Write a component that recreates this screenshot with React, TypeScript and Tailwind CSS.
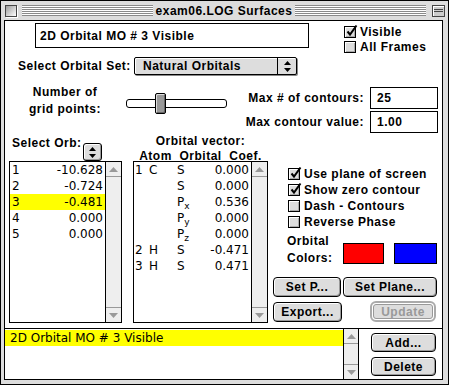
import React from 'react';

const sans = "font-['Liberation_Sans',Arial,sans-serif] tracking-[0.5px]";
const geneva = "font-['DejaVu_Sans',Verdana,sans-serif] tracking-normal";

function CheckBox({ checked = false, children }: { checked?: boolean; children: React.ReactNode }) {
  return (
    <div className="flex h-[16px] items-center">
      <div className="relative h-[12px] w-[12px] border border-black bg-[#dddddd] shadow-[inset_1px_1px_0_#ffffff,inset_-1px_-1px_0_#aaaaaa]">
        {checked && (
          <svg className="absolute left-[1px] top-[-3px]" width="12" height="13" viewBox="0 0 12 13">
            <path d="M1.5 7.5 L4 10.5 L10.5 1.5" stroke="#000" strokeWidth="2" fill="none" />
          </svg>
        )}
      </div>
      <span className="ml-[4px] text-[12px] font-bold leading-[14px]">{children}</span>
    </div>
  );
}

function PushButton({ children, className }: { children: React.ReactNode; className: string }) {
  return (
    <div
      className={`flex items-center justify-center rounded-[4px] border border-black bg-[#dddddd] text-[12px] font-bold leading-none shadow-[inset_1px_1px_0_#ffffff,inset_-1px_-1px_0_#999999] ${className}`}
    >
      {children}
    </div>
  );
}

function Arrows() {
  return (
    <svg width="7" height="11" viewBox="0 0 7 11">
      <path d="M0 4 L3.5 0 L7 4 Z M0 7 L3.5 11 L7 7 Z" fill="#000" />
    </svg>
  );
}

function ScrollBar({ className = '' }: { className?: string }) {
  return (
    <div className={`flex w-[16px] flex-col justify-between border-l border-black bg-[#eeeeee] ${className}`}>
      <div className="flex h-[15px] items-center justify-center border-b border-[#999999]">
        <svg width="9" height="5" viewBox="0 0 9 5">
          <path d="M0 5 L4.5 0 L9 5 Z" fill="#999999" />
        </svg>
      </div>
      <div className="flex h-[15px] items-center justify-center border-t border-[#999999]">
        <svg width="9" height="5" viewBox="0 0 9 5">
          <path d="M0 0 L4.5 5 L9 0 Z" fill="#999999" />
        </svg>
      </div>
    </div>
  );
}

const orbs = [
  ['1', '-10.628'],
  ['2', '-0.724'],
  ['3', '-0.481'],
  ['4', '0.000'],
  ['5', '0.000'],
];

const vec: [string, string, string, string | null, string][] = [
  ['1', 'C', 'S', null, '0.000'],
  ['', '', 'S', null, '0.000'],
  ['', '', 'P', 'x', '0.536'],
  ['', '', 'P', 'y', '0.000'],
  ['', '', 'P', 'z', '0.000'],
  ['2', 'H', 'S', null, '-0.471'],
  ['3', 'H', 'S', null, '0.471'],
];

function Stripes() {
  return (
    <div className="h-[11px] flex-1 bg-[repeating-linear-gradient(to_bottom,#8a8a8a_0px,#8a8a8a_1px,#ffffff_1px,#ffffff_2px)]" />
  );
}

export default function App() {
  return (
    <div className={`h-[385px] w-[449px] bg-white text-black ${sans}`}>
      <div className="flex h-[385px] w-[449px] flex-col border border-black bg-[#dddddd]">
        {/* title bar */}
        <div className="flex h-[19px] items-center pl-[4px] pr-[3px]">
          <div className="h-[12px] w-[12px] border border-[#444444] bg-[linear-gradient(135deg,#999999,#ffffff)] shadow-[1px_1px_0_#ffffff]" />
          <div className="ml-[5px] flex flex-1 items-center">
            <Stripes />
            <span className="px-[3px] text-[12px] font-bold leading-[14px]">exam06.LOG Surfaces</span>
            <Stripes />
          </div>
          <div className="ml-[6px] flex h-[12px] w-[13px] flex-col justify-center border border-[#444444] bg-[#cccccc] shadow-[inset_1px_1px_0_#ffffff]">
            <div className="mx-[1px] h-[3px] border-y border-[#444444]" />
          </div>
        </div>

        {/* content */}
        <div className="mb-[4px] ml-[3px] mr-[5px] flex flex-1 flex-col border border-black bg-white">
          <div className="flex h-[307px] flex-col">
            {/* row 1 */}
            <div className="flex h-[34px]">
              <div className="ml-[30px] mt-[2px] flex h-[25px] w-[274px] items-center border border-black pl-[4px] text-[12px] font-bold">
                2D Orbital MO # 3 Visible
              </div>
              <div className="ml-[35px] mt-[3px] flex flex-col">
                <CheckBox checked>Visible</CheckBox>
                <CheckBox>All Frames</CheckBox>
              </div>
            </div>

            {/* row 2 */}
            <div className="flex h-[22px] items-center">
              <div className="w-[129px] pl-[13px] text-[12px] font-bold">Select Orbital Set:</div>
              <div className="flex h-[18px] w-[163px] rounded-[2px] border border-black bg-[#dddddd] shadow-[1px_1px_0_#888888,inset_1px_1px_0_#ffffff]">
                <div className="flex flex-1 items-center pl-[8px] text-[12px] font-bold">Natural Orbitals</div>
                <div className="flex w-[19px] items-center justify-center border-l border-black">
                  <Arrows />
                </div>
              </div>
            </div>

            {/* row 3 */}
            <div className="flex h-[57px]">
              <div className="ml-[20px] mt-[7px] w-[80px] text-center text-[12px] font-bold leading-[17px]">
                Number of
                <br />
                grid points:
              </div>
              <div className="relative ml-[21px] mt-[16px] h-[21px] w-[101px]">
                <div className="mt-[6px] h-[9px] w-[101px] rounded-[3px] border border-black bg-white" />
                <div className="absolute left-[29px] top-0 h-[21px] w-[11px] rounded-[2px] border border-black bg-[#999999] shadow-[inset_1px_1px_0_#dddddd,inset_-1px_-1px_0_#666666]" />
              </div>
              <div className="ml-auto mr-[4px] mt-[10px] flex flex-col gap-[2px]">
                <div className="flex items-center justify-end">
                  <span className="text-[12px] font-bold">Max # of contours:</span>
                  <div className="ml-[6px] flex h-[22px] w-[68px] items-center border border-black pl-[6px] text-[12px] font-bold">25</div>
                </div>
                <div className="flex items-center justify-end">
                  <span className="text-[12px] font-bold">Max contour value:</span>
                  <div className="ml-[6px] flex h-[22px] w-[68px] items-center border border-black pl-[6px] text-[12px] font-bold">1.00</div>
                </div>
              </div>
            </div>

            {/* row 4 */}
            <div className="flex items-start">
              {/* orbital list */}
              <div className="ml-[4px] flex w-[113px] flex-col">
                <div className="flex h-[27px]">
                  <div className="w-[74px] pl-[3px] pt-[2px] text-[12px] font-bold leading-[14px]">Select Orb:</div>
                  <div className="mt-[9px] flex h-[18px] w-[19px] items-center justify-center rounded-[3px] border border-black bg-[#dddddd] shadow-[inset_1px_1px_0_#ffffff,inset_-1px_-1px_0_#999999]">
                    <Arrows />
                  </div>
                </div>
                <div className="flex h-[162px] border border-black">
                  <div className={`flex-1 ${geneva} text-[12px]`}>
                    {orbs.map(([n, v]) => (
                      <div key={n} className={`flex h-[16px] items-center justify-between pl-[2px] pr-[2px] leading-none ${n === '3' ? 'bg-[#ffff00]' : ''}`}>
                        <span>{n}</span>
                        <span>{v}</span>
                      </div>
                    ))}
                  </div>
                  <ScrollBar />
                </div>
              </div>

              {/* orbital vector */}
              <div className="ml-[11px] flex w-[135px] flex-col">
                <div className="flex h-[27px] flex-col items-center whitespace-nowrap text-[12px] font-bold leading-[15px]">
                  <span>Orbital vector:</span>
                  <span className="whitespace-pre">Atom  Orbital  Coef.</span>
                </div>
                <div className="flex h-[162px] border border-black">
                  <div className={`flex-1 ${geneva} text-[12px]`}>
                    {vec.map(([a, el, orb, sub, c], i) => (
                      <div key={i} className="flex h-[16px] items-center leading-none">
                        <span className="w-[15px] pl-[1px]">{a}</span>
                        <span className="w-[28px]">{el}</span>
                        <span className="w-[30px]">
                          {orb}
                          {sub && <span className="relative top-[3px] text-[9px]">{sub}</span>}
                        </span>
                        <span className="flex-1 pr-[2px] text-right">{c}</span>
                      </div>
                    ))}
                  </div>
                  <ScrollBar className="w-[12px]" />
                </div>
              </div>

              {/* options */}
              <div className="ml-[5px] flex w-[165px] flex-col">
                <div className="flex flex-col pl-[15px] pt-[32px]">
                  <CheckBox checked>Use plane of screen</CheckBox>
                  <CheckBox checked>Show zero contour</CheckBox>
                  <CheckBox>Dash - Contours</CheckBox>
                  <CheckBox>Reverse Phase</CheckBox>
                </div>
                <div className="mt-[3px] flex">
                  <div className="w-[70px] pl-[14px] text-[12px] font-bold leading-[17px]">
                    Orbital
                    <br />
                    Colors:
                  </div>
                  <div className="mt-[10px] h-[21px] w-[41px] border border-black bg-[#ff0000]" />
                  <div className="ml-[10px] mt-[10px] h-[21px] w-[43px] border border-black bg-[#0000ff]" />
                </div>
                <div className="mt-[10px] flex gap-[2px]">
                  <PushButton className="h-[20px] w-[68px]">Set P...</PushButton>
                  <PushButton className="h-[20px] w-[94px]">Set Plane...</PushButton>
                </div>
                <div className="mt-[4px] flex items-center">
                  <PushButton className="h-[20px] w-[69px]">Export...</PushButton>
                  <div className="ml-[28px] flex h-[21px] w-[66px] rounded-[6px] border-2 border-[#aaaaaa] p-[1px]">
                    <div className="flex flex-1 items-center justify-center rounded-[3px] border border-[#999999] bg-[#dddddd] text-[12px] font-bold leading-none text-[#999999]">
                      Update
                    </div>
                  </div>
                </div>
              </div>
            </div>
          </div>

          {/* bottom list */}
          <div className="flex h-[51px] border-t border-black">
            <div className={`w-[338px] ${geneva} text-[12px]`}>
              <div className="mt-[1px] flex h-[16px] items-center bg-[#ffff00] pl-[5px] leading-none">2D Orbital MO # 3 Visible</div>
            </div>
            <ScrollBar className="border-r" />
            <div className="ml-[12px] flex flex-col">
              <PushButton className="mt-[4px] h-[19px] w-[65px]">Add...</PushButton>
              <PushButton className="mt-[5px] h-[19px] w-[65px]">Delete</PushButton>
            </div>
          </div>
        </div>
      </div>
    </div>
  );
}
